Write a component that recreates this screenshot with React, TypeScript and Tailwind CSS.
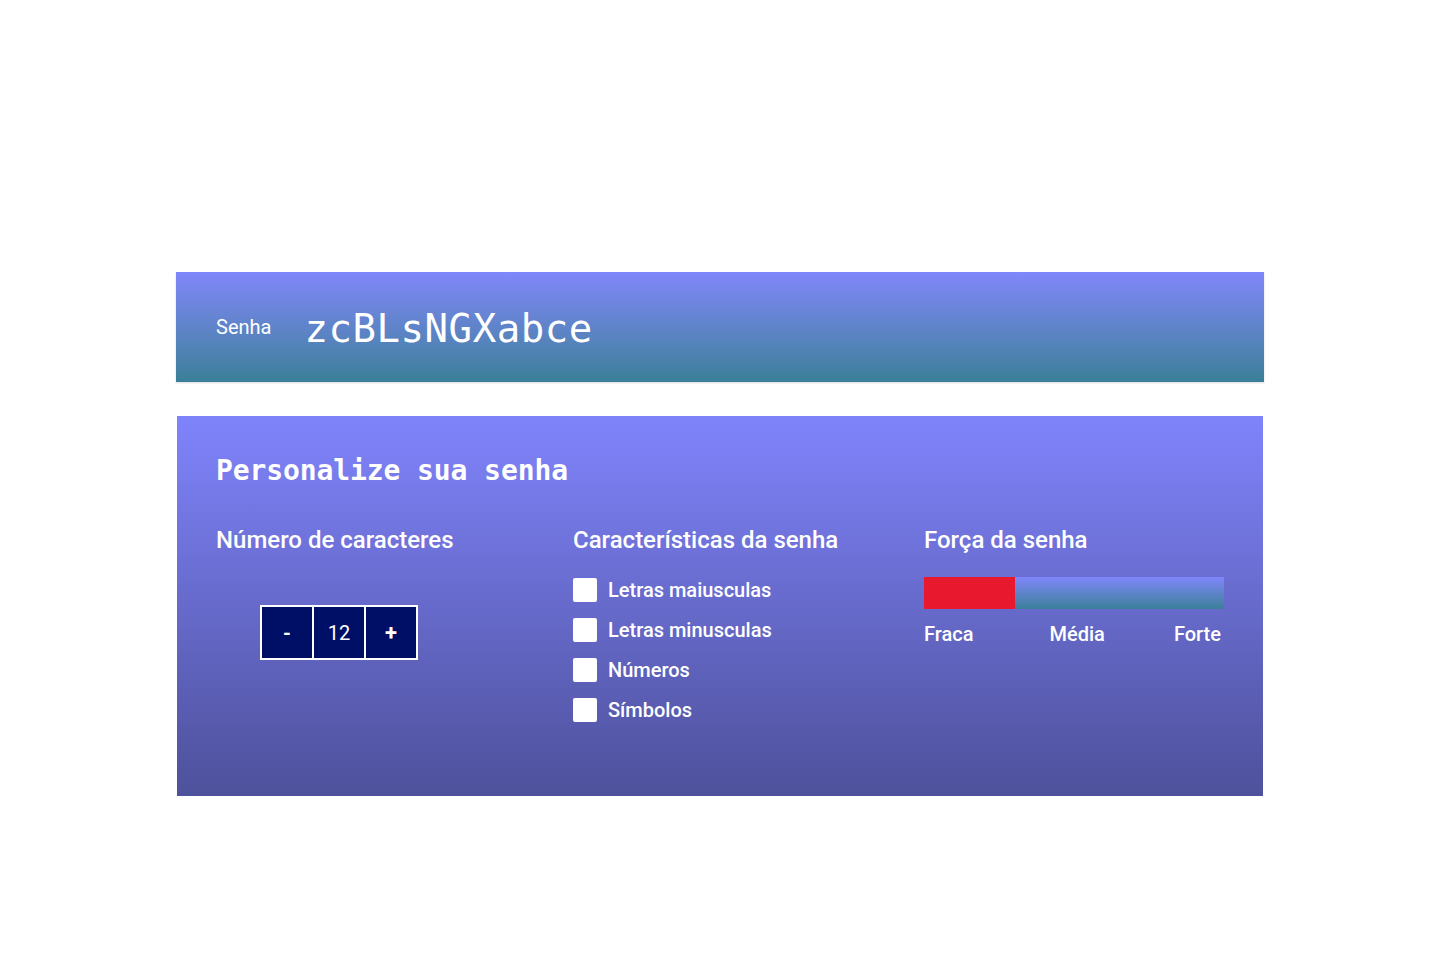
import React from 'react';

const OPTIONS = ['Letras maiusculas', 'Letras minusculas', 'Números', 'Símbolos'];

export default function App() {
  return (
    <div className="min-h-[969px] w-full bg-white pt-[272px] font-['Roboto','Liberation_Sans',sans-serif] text-white">
      <div className="mx-auto w-[1088px]">
        <div className="flex h-[110px] items-center bg-gradient-to-b from-[#8086fb] to-[#3a7f99] pl-[40px] shadow-[0_1px_2px_rgba(0,0,0,0.15)]">
          <span className="text-[20px]">Senha</span>
          <span className="ml-[33px] mt-[4px] font-['DejaVu_Sans_Mono','Liberation_Mono',monospace] text-[39px] tracking-[0.55px]">
            zcBLsNGXabce
          </span>
        </div>

        <div className="mx-auto mt-[34px] h-[380px] w-[1086px] bg-gradient-to-b from-[#8084fc] to-[#4e519b] px-[39px] pt-[38px]">
          <h1 className="font-['DejaVu_Sans_Mono','Liberation_Mono',monospace] text-[28px] font-bold leading-[34px] tracking-[-0.1px]">
            Personalize sua senha
          </h1>

          <div className="mt-[37px] flex">
            <div className="w-[357px]">
              <h2 className="text-[24px] font-medium leading-[30px]">Número de caracteres</h2>
              <div className="ml-[44px] mt-[50px] flex w-fit border-2 border-white">
                <button className="h-[51px] w-[50px] bg-[#000f66] text-[20px] font-bold">-</button>
                <span className="flex h-[51px] w-[54px] items-center justify-center border-x-2 border-white bg-[#000f66] text-[20px]">
                  12
                </span>
                <button className="h-[51px] w-[50px] bg-[#000f66] text-[22px] font-bold">+</button>
              </div>
            </div>

            <div className="w-[351px]">
              <h2 className="text-[24px] font-medium leading-[30px]">Características da senha</h2>
              <div className="mt-[23px] flex flex-col gap-[16px]">
                {OPTIONS.map((label) => (
                  <label key={label} className="flex h-[24px] items-center gap-[11px]">
                    <span className="h-[24px] w-[24px] rounded-[2px] bg-white" />
                    <span className="text-[20px] font-medium">{label}</span>
                  </label>
                ))}
              </div>
            </div>

            <div className="w-[300px]">
              <h2 className="text-[24px] font-medium leading-[30px]">Força da senha</h2>
              <div className="mt-[22px] flex h-[32px] w-[300px]">
                <div className="h-full w-[91px] bg-[#e8192f]" />
                <div className="h-full flex-1 bg-gradient-to-b from-[#7f86fb] to-[#3a7f99]" />
              </div>
              <div className="mt-[10px] flex text-[20px] font-medium">
                <span>Fraca</span>
                <span className="ml-[76px]">Média</span>
                <span className="ml-auto pr-[3px]">Forte</span>
              </div>
            </div>
          </div>
        </div>
      </div>
    </div>
  );
}
